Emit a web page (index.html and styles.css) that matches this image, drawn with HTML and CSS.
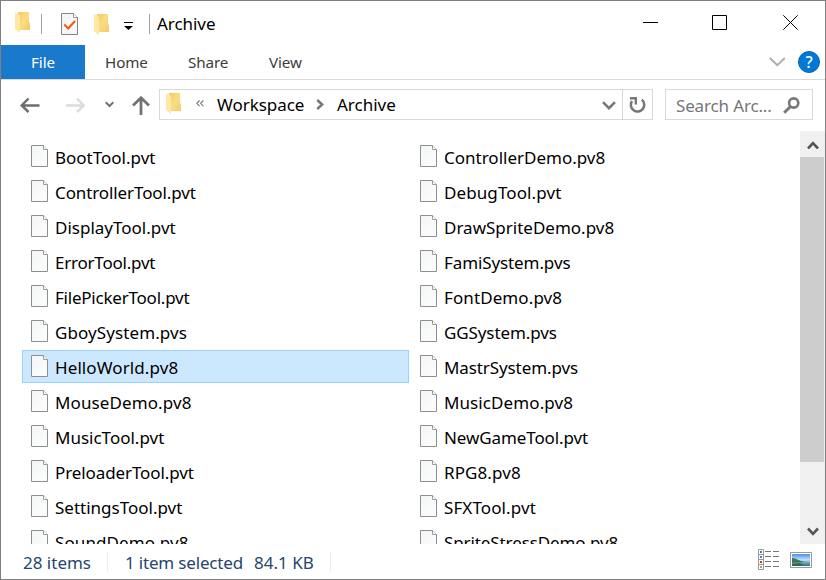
FILE: index.html
```
<!DOCTYPE html>
<html lang="en">
<head>
<meta charset="utf-8">
<title>Archive</title>
<link rel="stylesheet" href="styles.css">
</head>
<body>
<svg class="defs" aria-hidden="true">
  <defs>
    <linearGradient id="foldBack" x1="0" y1="0" x2="1" y2="1"><stop offset="0" stop-color="#f3ca67"/><stop offset=".5" stop-color="#fbdc84"/><stop offset="1" stop-color="#f3ca67"/></linearGradient>
    <linearGradient id="paper" x1="0" y1="0" x2="1" y2="1"><stop offset="0" stop-color="#f3f5f6"/><stop offset="1" stop-color="#fdfdfd"/></linearGradient>
    <linearGradient id="sky" x1="0" y1="0" x2="0" y2="1"><stop offset="0" stop-color="#4a8fe8"/><stop offset=".5" stop-color="#c5e3f7"/><stop offset=".65" stop-color="#7fb4c4"/><stop offset="1" stop-color="#2c7194"/></linearGradient>
  </defs>
  <symbol id="folder" viewBox="0 0 15 22"><path d="M3 0H14V10L15 11V18H3Z" fill="url(#foldBack)"/><path d="M0 0L5 3V21L1 18L0 17Z" fill="#ffe8a6"/></symbol>
  <symbol id="file" viewBox="0 0 17 22"><path d="M.5 .5H12.5L16.5 4.5V21.5H.5Z" fill="url(#paper)" stroke="#8e8e8e"/><path d="M12.5 .5V4.5H16.5" fill="#fff" stroke="#9c9c9c"/></symbol>
</svg>
<div class="window">
  <header class="titlebar">
    <svg class="folder app-folder"><use href="#folder"/></svg>
    <span class="divider first-divider"></span>
    <svg class="properties" viewBox="0 0 17 22"><path d="M.5 .5H12.5L16.5 4.5V21.5H.5Z" fill="#f5f6f7" stroke="#858585"/><path d="M12.5 .5V4.5H16.5" fill="#fff" stroke="#999"/><path d="M3.3 11.5L7.2 15.5L14 8" fill="none" stroke="#f05a16" stroke-width="2.1"/></svg>
    <svg class="folder new-folder"><use href="#folder"/></svg>
    <svg class="customize" viewBox="0 0 9 8"><path d="M0 0H9V1H0ZM0 4H9L4.5 8Z"/></svg>
    <span class="divider second-divider"></span>
    <h1 class="title">Archive</h1>
    <div class="controls">
      <svg viewBox="0 0 15 15"><path d="M0 7.5H15"/></svg>
      <svg viewBox="0 0 15 15"><path d="M.5 .5H14.5V14.5H.5Z"/></svg>
      <svg viewBox="0 0 15 15"><path d="M.3 .3L14.7 14.7M14.7 .3L.3 14.7"/></svg>
    </div>
  </header>
  <nav class="ribbon">
    <span class="tab file-tab">File</span>
    <span class="tab home">Home</span>
    <span class="tab share">Share</span>
    <span class="tab view">View</span>
    <svg class="expand" viewBox="0 0 17 10"><path d="M.8 1L8.3 8.2L15.8 1" fill="none" stroke="#adadad" stroke-width="2"/></svg>
    <span class="help">?</span>
  </nav>
  <div class="navbar">
    <svg class="back" viewBox="0 0 20 16"><path d="M19.5 8.5H2M8.5 1.5L1.7 8.5L8.5 15" fill="none" stroke="#6e6e6e" stroke-width="2.5"/></svg>
    <svg class="forward" viewBox="0 0 20 16"><path d="M0 8.5H17.5M11 1.5L17.8 8.5L11 15" fill="none" stroke="#dcdcdc" stroke-width="2.5"/></svg>
    <svg class="recent" viewBox="0 0 9 7"><path d="M.7 1.2L4.5 5L8.3 1.2" fill="none" stroke="#737373" stroke-width="2"/></svg>
    <svg class="up" viewBox="0 0 18 19"><path d="M9 19V2M1 9.5L9 1.8L17 9.5" fill="none" stroke="#737373" stroke-width="2.8"/></svg>
    <div class="address">
      <svg class="folder path-folder"><use href="#folder"/></svg>
      <svg class="more" viewBox="0 0 8 7"><path d="M3.6 .5L.8 3.3L3.6 6.1M7.4 .5L4.6 3.3L7.4 6.1" fill="none" stroke="#777" stroke-width="1.1"/></svg>
      <span class="crumb workspace">Workspace</span>
      <svg class="crumb-arrow" viewBox="0 0 8 11"><path d="M1.2 1L6.2 5.5L1.2 10" fill="none" stroke="#777" stroke-width="2.5"/></svg>
      <span class="crumb archive">Archive</span>
      <svg class="drop" viewBox="0 0 14 9"><path d="M1 1.2L7 7.2L13 1.2" fill="none" stroke="#777" stroke-width="2.6"/></svg>
      <div class="refresh"><svg viewBox="0 0 17 17"><path d="M12.8 2.6A6.7 6.7 0 1 1 3 4" fill="none" stroke="#777" stroke-width="2.5"/><path d="M1 1.2H6.8V7.5" fill="none" stroke="#777" stroke-width="2.4"/></svg></div>
    </div>
    <div class="search"><span>Search Arc...</span><svg viewBox="0 0 17 17"><circle cx="10.7" cy="6" r="4.6" fill="none" stroke="#777" stroke-width="2.6"/><path d="M7.5 9.5L1.2 15.8" stroke="#777" stroke-width="3"/></svg></div>
  </div>
  <main class="content">
    <div class="files">
      <div class="column">
        <div class="row"><svg><use href="#file"/></svg><span>BootTool.pvt</span></div>
        <div class="row tight"><svg><use href="#file"/></svg><span>ControllerTool.pvt</span></div>
        <div class="row"><svg><use href="#file"/></svg><span>DisplayTool.pvt</span></div>
        <div class="row tighter"><svg><use href="#file"/></svg><span>ErrorTool.pvt</span></div>
        <div class="row tighter"><svg><use href="#file"/></svg><span>FilePickerTool.pvt</span></div>
        <div class="row loose"><svg><use href="#file"/></svg><span>GboySystem.pvs</span></div>
        <div class="row selected loose"><svg><use href="#file"/></svg><span>HelloWorld.pv8</span></div>
        <div class="row loose"><svg><use href="#file"/></svg><span>MouseDemo.pv8</span></div>
        <div class="row"><svg><use href="#file"/></svg><span>MusicTool.pvt</span></div>
        <div class="row tight"><svg><use href="#file"/></svg><span>PreloaderTool.pvt</span></div>
        <div class="row"><svg><use href="#file"/></svg><span>SettingsTool.pvt</span></div>
        <div class="row loose"><svg><use href="#file"/></svg><span>SoundDemo.pv8</span></div>
      </div>
      <div class="column">
        <div class="row"><svg><use href="#file"/></svg><span>ControllerDemo.pv8</span></div>
        <div class="row loose"><svg><use href="#file"/></svg><span>DebugTool.pvt</span></div>
        <div class="row"><svg><use href="#file"/></svg><span>DrawSpriteDemo.pv8</span></div>
        <div class="row tight"><svg><use href="#file"/></svg><span>FamiSystem.pvs</span></div>
        <div class="row loose"><svg><use href="#file"/></svg><span>FontDemo.pv8</span></div>
        <div class="row tight"><svg><use href="#file"/></svg><span>GGSystem.pvs</span></div>
        <div class="row tight"><svg><use href="#file"/></svg><span>MastrSystem.pvs</span></div>
        <div class="row loose"><svg><use href="#file"/></svg><span>MusicDemo.pv8</span></div>
        <div class="row tight"><svg><use href="#file"/></svg><span>NewGameTool.pvt</span></div>
        <div class="row loose"><svg><use href="#file"/></svg><span>RPG8.pv8</span></div>
        <div class="row loose"><svg><use href="#file"/></svg><span>SFXTool.pvt</span></div>
        <div class="row tight"><svg><use href="#file"/></svg><span>SpriteStressDemo.pv8</span></div>
      </div>
    </div>
    <div class="scrollbar">
      <div class="scroll-button"><svg viewBox="0 0 12 9"><path d="M1 8.5L6 3.2L11 8.5" fill="none" stroke="#555" stroke-width="2.6"/></svg></div>
      <div class="thumb"></div>
      <div class="scroll-button"><svg viewBox="0 0 12 9"><path d="M1 1.5L6 6.8L11 1.5" fill="none" stroke="#555" stroke-width="2.6"/></svg></div>
    </div>
  </main>
  <footer class="status">
    <span class="count">28 items</span>
    <span class="status-line"></span>
    <span class="selection">1 item selected</span>
    <span class="size">84.1 KB</span>
    <span class="status-line"></span>
    <svg class="details-view" viewBox="0 0 21 21"><path d="M.5 .5H5.5V20.5H.5ZM.5 5.5H5.5M.5 10.5H5.5M.5 15.5H5.5" fill="#fff" stroke="#999"/><path d="M7 2.5H13M15 2.5H21M7 7.5H13M15 7.5H21M7 12.5H13M15 12.5H21M7 17.5H13M15 17.5H21" stroke="#777"/><path d="M2 2H4V4H2Z" fill="#2f8a9b"/><path d="M2 7H4V9H2Z" fill="#557fc0"/><path d="M2 12H4V14H2Z" fill="#c9341c"/><path d="M2 17H4V19H2Z" fill="#8bb45e"/></svg>
    <svg class="picture-view" viewBox="0 0 22 16"><path d="M.5 .5H21.5V15.5H.5Z" fill="#fff" stroke="#999"/><path d="M2 2H20V14H2Z" fill="url(#sky)"/><path d="M2 6C6 6 9 9 15 10L2 11Z" fill="#3e7559"/><path d="M2 12L10 11L14 14H2Z" fill="#2f6658"/></svg>
  </footer>
</div>
</body>
</html>
```

FILE: styles.css
```
* { box-sizing: border-box; }
body { margin: 0; background: #fff; font-family: "Noto Sans", "Open Sans", sans-serif; color: #000; }
svg { display: block; flex: none; }
.defs { position: absolute; width: 0; height: 0; }
.window { width: 826px; height: 580px; border: 1px solid #808080; background: #fff; display: flex; flex-direction: column; overflow: hidden; }
.folder { width: 15px; height: 22px; }

.titlebar { height: 44px; flex: none; display: flex; align-items: flex-start; }
.app-folder { margin: 11px 0 0 14px; }
.divider { width: 1px; height: 20px; background: #a0a0a0; margin-top: 13px; }
.first-divider { margin-left: 11px; }
.properties { width: 17px; height: 22px; margin: 12px 0 0 19px; }
.new-folder { margin: 13px 0 0 16px; }
.customize { width: 9px; height: 8px; margin: 21px 0 0 15px; }
.second-divider { margin-left: 16px; }
.title { margin: 10px 0 0 7px; font-size: 17px; font-weight: 400; line-height: 26px; letter-spacing: -.05px; }
.controls { margin: 14px 27px 0 auto; display: flex; gap: 56px; }
.controls svg { width: 15px; height: 15px; fill: none; stroke: #000; stroke-width: 1; }
.controls svg:nth-child(2) { margin: 0 0 0 -2px; }

.ribbon { height: 35px; flex: none; display: flex; border-bottom: 1px solid #dadada; font-size: 15.2px; line-height: 34px; color: #3c3c3c; letter-spacing: -.1px; }
.file-tab { width: 84px; height: 34px; background: #1979ca; color: #fff; text-align: center; }
.home { margin-left: 20px; width: 83px; }
.share { width: 81px; }
.expand { width: 17px; height: 10px; margin: 12px 12px 0 auto; }
.help { width: 22px; height: 22px; margin: 6px 5px 0 0; border-radius: 50%; border: 1px solid #0862b0; background: #0078d7; color: #fff; font-size: 16px; font-weight: 500; line-height: 20px; text-align: center; }

.navbar { height: 51px; flex: none; display: flex; align-items: flex-start; }
.back { width: 20px; height: 16px; margin: 17px 0 0 19px; }
.forward { width: 20px; height: 16px; margin: 17px 0 0 26px; }
.recent { width: 9px; height: 7px; margin: 21px 0 0 19px; }
.up { width: 18px; height: 19px; margin: 16px 0 0 18px; }
.address { width: 494px; height: 31px; margin: 9px 0 0 9px; border: 1px solid #d9d9d9; display: flex; align-items: flex-start; font-size: 17px; line-height: 29px; }
.path-folder { margin: 3px 0 0 6px; }
.more { width: 8px; height: 7px; margin: 10px 13px 0 15px; }
.workspace { width: 99px; letter-spacing: -.05px; }
.crumb-arrow { width: 8px; height: 11px; margin: 9px 13px 0 0; }
.drop { width: 14px; height: 9px; margin: 11px 6px 0 auto; }
.refresh { width: 30px; height: 29px; border-left: 1px solid #d9d9d9; padding: 7px 0 0 6px; }
.refresh svg { width: 17px; height: 17px; }
.search { width: 148px; height: 31px; margin: 9px 0 0 12px; border: 1px solid #d9d9d9; display: flex; padding: 0 12px 0 10px; justify-content: space-between; font-size: 17px; line-height: 31px; letter-spacing: -.15px; color: #767676; }
.search svg { width: 17px; height: 17px; margin-top: 7px; }

.content { height: 413px; flex: none; display: flex; overflow: hidden; }
.files { flex: 1; display: flex; gap: 2px; padding: 9px 0 0 21px; }
.column { width: 387px; display: flex; flex-direction: column; gap: 2px; }
.row { height: 33px; flex: none; display: flex; align-items: flex-start; border: 1px solid transparent; padding: 4px 0 0 8px; font-size: 17px; line-height: 26px; white-space: nowrap; }
.row svg { width: 17px; height: 22px; margin-right: 7px; }
.row.tight { letter-spacing: -.1px; }
.row.tighter { letter-spacing: -.22px; }
.row.loose { letter-spacing: .1px; }
.selected { background: #cce8ff; border-color: #99d1ff; }
.scrollbar { width: 25px; background: #f0f0f0; display: flex; flex-direction: column; }
.scroll-button { height: 26px; display: flex; align-items: center; justify-content: center; }
.scroll-button svg { width: 12px; height: 9px; }
.thumb { height: 305px; width: 24px; background: #cdcdcd; margin-bottom: 56px; }

.status { height: 35px; flex: none; display: flex; align-items: flex-start; font-size: 17px; line-height: 37px; color: #26456f; }
.count { margin-left: 22px; width: 84px; }
.status-line { width: 1px; height: 19px; margin-top: 8px; background: #ececec; }
.selection { margin-left: 17px; width: 129px; white-space: nowrap; letter-spacing: -.18px; }
.size { width: 76px; white-space: nowrap; }
.details-view { width: 21px; height: 21px; margin: 5px 11px 0 auto; }
.picture-view { width: 22px; height: 16px; margin: 8px 13px 0 0; }
```
